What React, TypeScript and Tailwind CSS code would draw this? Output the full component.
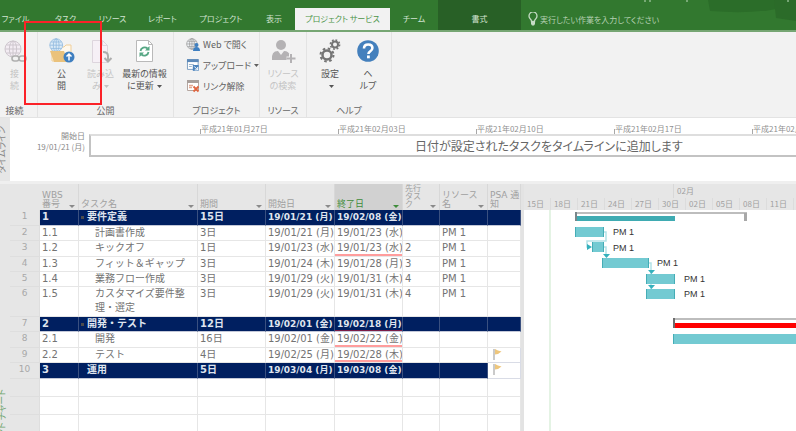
import React from "react";

type TaskRow = {
  id: number;
  wbs: string;
  name: string;
  duration: string;
  start: string;
  finish: string;
  pred?: string;
  resource?: string;
  summary?: boolean;
  collapsible?: boolean;
  late?: boolean;
  flag?: boolean;
  height: string;
};

const tasks: TaskRow[] = [
  { id: 1, wbs: "1", name: "要件定義", duration: "15日", start: "19/01/21 (月)", finish: "19/02/08 (金)", summary: true, collapsible: true, height: "h-[16px]" },
  { id: 2, wbs: "1.1", name: "計画書作成", duration: "3日", start: "19/01/21 (月)", finish: "19/01/23 (水)", resource: "PM 1", height: "h-[15px]" },
  { id: 3, wbs: "1.2", name: "キックオフ", duration: "1日", start: "19/01/23 (水)", finish: "19/01/23 (水)", pred: "2", resource: "PM 1", late: true, height: "h-[16px]" },
  { id: 4, wbs: "1.3", name: "フィット＆ギャップ", duration: "3日", start: "19/01/24 (木)", finish: "19/01/28 (月)", pred: "3", resource: "PM 1", height: "h-[15px]" },
  { id: 5, wbs: "1.4", name: "業務フロー作成", duration: "3日", start: "19/01/29 (火)", finish: "19/01/31 (木)", pred: "4", resource: "PM 1", height: "h-[15px]" },
  { id: 6, wbs: "1.5", name: "カスタマイズ要件整理・選定", duration: "3日", start: "19/01/29 (火)", finish: "19/01/31 (木)", pred: "4", resource: "PM 1", height: "h-[30px]" },
  { id: 7, wbs: "2", name: "開発・テスト", duration: "12日", start: "19/02/01 (金)", finish: "19/02/18 (月)", summary: true, collapsible: true, late: true, height: "h-[15px]" },
  { id: 8, wbs: "2.1", name: "開発", duration: "16日", start: "19/02/01 (金)", finish: "19/02/22 (金)", late: true, height: "h-[16px]" },
  { id: 9, wbs: "2.2", name: "テスト", duration: "4日", start: "19/02/25 (月)", finish: "19/02/28 (木)", late: true, flag: true, height: "h-[15px]" },
  { id: 10, wbs: "3", name: "運用", duration: "5日", start: "19/03/04 (月)", finish: "19/03/08 (金)", summary: true, flag: true, height: "h-[16px]" },
];

const columns = [
  { label: "WBS 番号", width: "w-[39px]", box: "w-[24px]", arrow: true },
  { label: "タスク名", width: "w-[119px]", box: "w-[90px]", arrow: true },
  { label: "期間", width: "w-[68px]", box: "w-[40px]", arrow: true },
  { label: "開始日", width: "w-[69px]", box: "w-[40px]", arrow: true },
  { label: "終了日", width: "w-[68px]", box: "w-[40px]", arrow: true, active: true },
  { label: "先行タスク", width: "w-[37px]", box: "w-[18px] text-[8px] leading-[8px]", arrow: true },
  { label: "リソース名", width: "w-[48px]", box: "w-[36px]", arrow: true },
  { label: "PSA 通知", width: "w-[33px]", box: "w-[30px]", arrow: false },
];

const days = ["15日", "18日", "21日", "24日", "27日", "30日", "02日", "05日", "08日", "11日", "14日"];
const weeks = ["平成21年01月27日", "平成21年02月03日", "平成21年02月10日", "平成21年02月17日", "平成21年02月24日"];

function Caret() {
  return (
    <svg width="5" height="3" viewBox="0 0 5 3" className="ml-[3px] inline-block align-middle" aria-hidden="true">
      <path d="M0 0h5L2.500 3z" fill="currentColor" />
    </svg>
  );
}

function Tab({ children, className }: { children: React.ReactNode; className: string }) {
  return (
    <button role="tab" className={`h-[22px] shrink-0 whitespace-nowrap text-center text-[8px] leading-[22px] ${className}`}>
      {children}
    </button>
  );
}

function Group({ label, className, children }: { label: string; className: string; children: React.ReactNode }) {
  return (
    <section aria-label={label} className={`flex h-full shrink-0 flex-col border-r border-[#e3e3e3] ${className}`}>
      <div className="flex flex-1 justify-center pt-[6px]">{children}</div>
      <div className="h-[13px] text-center text-[9px] leading-[13px] text-[#666]">{label}</div>
    </section>
  );
}

function BigButton({ icon, lines, className, disabled, menu }: { icon: React.ReactNode; lines: string[]; className: string; disabled?: boolean; menu?: boolean }) {
  return (
    <button disabled={disabled} className={`flex shrink-0 flex-col items-center text-[9px] leading-[12px] ${disabled ? "text-[#c4c4c4]" : "text-[#555]"} ${className}`}>
      <span className="flex h-[30px] items-start justify-center">{icon}</span>
      {lines.map((l, i) => (
        <span key={i} className="h-[12px] whitespace-nowrap">
          {l}
          {menu && i === lines.length - 1 && <Caret />}
        </span>
      ))}
    </button>
  );
}

function SmallButton({ icon, label, menu }: { icon: React.ReactNode; label: string; menu?: boolean }) {
  return (
    <button className="flex h-[21px] items-center whitespace-nowrap text-[9px] text-[#606060]">
      {icon}
      <span className="pl-[3px]">{label}</span>
      {menu && <Caret />}
    </button>
  );
}

function GlobeLines({ color, fill }: { color: string; fill: string }) {
  return (
    <g stroke={color} fill="none">
      <circle cx="9" cy="9" r="8" fill={fill} />
      <ellipse cx="9" cy="9" rx="3.6" ry="8" />
      <path d="M9 1v16M1 9h16M2.5 5h13M2.5 13h13" />
    </g>
  );
}

const ConnectIcon = () => (
  <svg width="26" height="27" viewBox="0 0 26 27" aria-hidden="true">
    <g transform="translate(2 2)"><GlobeLines color="#cdc6cd" fill="#f3ecf3" /></g>
    <g fill="#f2f2f2" stroke="#b0b0b0" strokeWidth="1.6">
      <rect x="10" y="18" width="7" height="5" rx="2.5" />
      <rect x="17" y="18" width="7" height="5" rx="2.5" />
    </g>
  </svg>
);

const PublishIcon = () => (
  <svg width="26" height="27" viewBox="0 0 26 27" aria-hidden="true">
    <path d="M3 9h12l2-2h5v16H3z" fill="#fff8ec" stroke="#f0cf99" />
    <g transform="scale(.8)"><GlobeLines color="#8fb9de" fill="#dcebf7" /></g>
    <path d="M1 13h14l4 11H5z" fill="#eac27c" />
    <circle cx="20" cy="19" r="5.5" fill="#3f7fc0" />
    <path d="M20 22.500v-6M17.500 18.500l2.500-2.500 2.500 2.500" stroke="#fff" strokeWidth="1.500" fill="none" />
  </svg>
);

const ImportIcon = () => (
  <svg width="26" height="27" viewBox="0 0 26 27" aria-hidden="true">
    <path d="M4.500 2.500h10l5 5v17h-15z" fill="#f6f0f6" stroke="#ddd5dd" />
    <path d="M14.500 2.500v5h5" fill="none" stroke="#ddd5dd" />
    <path d="M15 14q5 0 5 4v5M16.500 20l3.500 3.500 3.500-3.500" fill="none" stroke="#adadad" strokeWidth="2" />
  </svg>
);

const RefreshIcon = () => (
  <svg width="20" height="26" viewBox="0 0 20 26" aria-hidden="true">
    <path d="M1.500 2.500h12l4 4v17h-16z" fill="#fff" stroke="#b9b9b9" />
    <path d="M13.500 2.500v4h4" fill="none" stroke="#b9b9b9" />
    <path d="M5.500 13a4.200 4.200 0 0 1 7-2.500M13.500 14a4.200 4.200 0 0 1-7 2.500" fill="none" stroke="#56a784" strokeWidth="1.800" />
    <path d="M14.500 8v4.500H10zM4.500 19v-4.500H9z" fill="#56a784" />
  </svg>
);

const WebIcon = () => (
  <svg width="14" height="13" viewBox="0 0 14 13" aria-hidden="true">
    <g transform="scale(.66)"><GlobeLines color="#949494" fill="#eef1f4" /></g>
    <circle cx="10.500" cy="7" r="2" fill="#3f7fc0" />
    <path d="M7 13q0-4 3.500-4t3.500 4z" fill="#3f7fc0" />
  </svg>
);

const UploadIcon = () => (
  <svg width="14" height="13" viewBox="0 0 14 13" aria-hidden="true">
    <path d="M1.500.5h11v10h-11z" fill="#fff" stroke="#7d9fc2" />
    <path d="M1 0h12v3H1z" fill="#5b88b8" />
    <path d="M3 5.500h5M3 7.500h3" stroke="#9ab3cd" />
    <path d="M7 6h6v6H7z" fill="#4b83bd" />
    <path d="M8.500 7.500l3.500 3.500M12 8v3H9" stroke="#fff" fill="none" />
  </svg>
);

const UnlinkIcon = () => (
  <svg width="14" height="13" viewBox="0 0 14 13" aria-hidden="true">
    <path d="M1.500.5h11v10h-11z" fill="#fff" stroke="#b5a6a0" />
    <path d="M1 0h12v3H1z" fill="#a9a09c" />
    <path d="M3 5.500h4M3 7.500h3" stroke="#e3a88f" strokeWidth="1.500" />
    <path d="M7.500 6.500l5 5M12.500 6.500l-5 5" stroke="#e0653f" strokeWidth="1.800" />
  </svg>
);

const PersonIcon = () => (
  <svg width="26" height="26" viewBox="0 0 26 26" aria-hidden="true">
    <circle cx="11" cy="7" r="5" fill="#b4b2b4" />
    <path d="M2 22q-1-9 6-9l3 4 3-4q5 0 6 5v4z" fill="#b4b2b4" />
    <path d="M21 16v9M16.500 20.500h9" stroke="#f2f2f2" strokeWidth="4" />
    <path d="M21 16v9M16.500 20.500h9" stroke="#b4b2b4" strokeWidth="2" />
  </svg>
);

const GearsIcon = () => (
  <svg width="22" height="26" viewBox="0 0 22 26" aria-hidden="true">
    <g fill="none" stroke="#757575">
      <circle cx="8" cy="17" r="4.500" strokeWidth="2.500" />
      <circle cx="8" cy="17" r="6.500" strokeWidth="2" strokeDasharray="2.550 2.550" />
      <circle cx="16" cy="6.500" r="3" strokeWidth="2" />
      <circle cx="16" cy="6.500" r="4.600" strokeWidth="1.600" strokeDasharray="1.800 1.800" />
    </g>
  </svg>
);

const HelpIcon = () => (
  <svg width="24" height="26" viewBox="0 0 24 26" aria-hidden="true">
    <circle cx="12" cy="13" r="10.800" fill="#4480bd" />
    <path d="M8 10.500q0-4 4.200-4t4.200 3.600q0 2-2.200 3.200-1.800 1-1.800 2.700" fill="none" stroke="#fff" strokeWidth="2.600" />
    <rect x="11" y="17.500" width="2.800" height="2.800" fill="#fff" />
  </svg>
);

const Flag = () => (
  <svg width="9" height="12" viewBox="0 0 9 12" className="ml-[3px] block" role="img" aria-label="通知">
    <path d="M1 1v11" stroke="#b8b8b8" strokeWidth="1.500" />
    <path d="M2 1l3 1.500 3.500 1L5 6 2 6.500z" fill="#eec67c" />
  </svg>
);

function TaskTable() {
  const cell = "overflow-hidden whitespace-nowrap border-r border-b p-0 pl-[2px] align-top";
  return (
    <table className="w-[511px] shrink-0 table-fixed border-separate border-spacing-0 font-['DejaVu_Sans','Noto_Sans_CJK_JP',sans-serif] text-[10px] leading-[14px] text-[#737373] [font-feature-settings:normal]">
      <thead>
        <tr className="h-[26px] bg-[#e6e6e6]">
          <th className="w-[30px] p-0" aria-label="行" />
          {columns.map((c) => (
            <th key={c.label} className={`border-r border-[#d8d8d8] p-0 font-normal ${c.width} ${c.active ? "bg-[#d1d1d1] text-[#3e8c3a]" : "text-[#a0a0a0]"}`}>
              <div className="flex h-[26px] items-end justify-between overflow-hidden pr-[3px] pb-[1px] pl-[2px] text-left text-[9px] leading-[9px]">
                <span className={`shrink-0 ${c.box}`}>{c.label}</span>
                {c.arrow && (
                  <svg width="6" height="5" viewBox="0 0 6 5" className={`shrink-0 ${c.active ? "fill-[#3e8c3a]" : "fill-[#8a8a8a]"}`} aria-hidden="true">
                    <path d="M0 1h6L3 4z" />
                  </svg>
                )}
              </div>
            </th>
          ))}
        </tr>
      </thead>
      <tbody>
        {tasks.map((t) => {
          const tone = t.summary ? "bg-[#001f60] border-r-[#3a5080] border-b-[#c3c8d8] font-bold text-[#dfe4ee]" : "bg-white border-[#e6e6e6]";
          const underline = t.late ? (t.summary ? "shadow-[inset_0_-1px_0_#7b1c46]" : "shadow-[inset_0_-2px_0_#ff9d9d]") : "";
          return (
            <tr key={t.id} className={t.height}>
              <th scope="row" className="border-r border-b border-[#dedede] bg-[#e6e6e6] p-0 align-top text-[9px] leading-[12px] font-normal text-[#a8a8a8]">{t.id}</th>
              <td className={`${cell} ${tone}`}>{t.wbs}</td>
              <td className={`${cell} ${tone}`}>
                {t.summary ? (
                  <div className="flex items-center">
                    <span className="flex w-[6px] items-center">
                      {t.collapsible && <span className="h-[3px] w-[3px] bg-[#4c4c4c]" />}
                    </span>
                    {t.name}
                  </div>
                ) : (
                  <div className="whitespace-normal pl-[14px] pr-[6px]">{t.name}</div>
                )}
              </td>
              <td className={`${cell} ${tone}`}>{t.duration}</td>
              <td className={`${cell} ${tone} ${t.summary ? "text-[9px]" : ""}`}>{t.start}</td>
              <td className={`${cell} ${tone} ${underline} ${t.summary ? "text-[9px]" : ""}`}>{t.finish}</td>
              <td className={`${cell} ${tone}`}>{t.pred}</td>
              <td className={`${cell} ${tone}`}>{t.resource}</td>
              <td className={`${cell} ${t.flag ? "border-[#d9dce6] bg-white" : tone}`}>{t.flag && <Flag />}</td>
            </tr>
          );
        })}
        {[11, 12, 13].map((n) => (
          <tr key={n} className="h-[18px]">
            <td className="border-r border-b border-[#dedede] bg-[#e6e6e6] p-0" />
            {columns.map((c) => (
              <td key={c.label} className="border-r border-b border-[#e6e6e6] bg-white p-0" />
            ))}
          </tr>
        ))}
      </tbody>
    </table>
  );
}

function Bar({ x, y, w }: { x: number; y: number; w: number }) {
  return (
    <g>
      <rect x={x} y={y} width={w} height="10" fill="#73cad2" />
      <rect x={x} y={y} width="1" height="10" fill="#45adb6" />
      <rect x={x + w - 1} y={y} width="1" height="10" fill="#45adb6" />
    </g>
  );
}

function Gantt() {
  return (
    <div className="flex min-w-0 flex-1 flex-col overflow-hidden bg-white">
      <div className="h-[26px] shrink-0 overflow-hidden bg-[#e6e6e6] text-[8px] text-[#a0a0a0]">
        <div className="flex h-[14px] leading-[14px]">
          <div className="w-[150px] shrink-0 border-r border-[#d8d8d8]" />
          <div className="pl-[3px]">02月</div>
        </div>
        <div className="flex h-[12px] leading-[12px]">
          {days.map((d) => (
            <div key={d} className="w-[27px] shrink-0 whitespace-nowrap border-r border-[#dcdcdc] pl-[3px]">{d}</div>
          ))}
        </div>
      </div>
      <svg className="h-[221px] w-full" role="img" aria-label="ガント チャート">
        <rect x="25" y="0" width="2" height="221" fill="#e4f3e4" />
        <path d="M52 3h170v8" fill="none" stroke="#bdbdbd" strokeWidth="2" />
        <rect x="220" y="3" width="3" height="8" fill="#a8a8a8" />
        <rect x="52" y="6" width="99" height="5" fill="#3fabb2" />
        <rect x="51" y="2" width="2" height="9" fill="#78868a" />
        <g fill="none" stroke="#b3e2e7" strokeWidth="1.500">
          <path d="M79 22h3v9H63v6h3" />
          <path d="M79 37h3v10" />
          <path d="M124 53h3v34" />
        </g>
        <g fill="#35b1bd">
          <path d="M63 34l5 3-5 3zM79 44h7l-3.500 4zM124 60h7l-3.500 4zM124 75h7l-3.500 4z" />
        </g>
        <Bar x={51} y={17} w={29} />
        <Bar x={68} y={32} w={12} />
        <Bar x={78} y={48} w={47} />
        <Bar x={122} y={64} w={29} />
        <Bar x={122} y={79} w={29} />
        <g className="fill-[#333] font-['Liberation_Sans',sans-serif] text-[9px]">
          <text x="89" y="25">PM 1</text>
          <text x="89" y="41">PM 1</text>
          <text x="133" y="56">PM 1</text>
          <text x="160" y="72">PM 1</text>
          <text x="160" y="87">PM 1</text>
        </g>
        <rect x="150" y="108" width="3000" height="2" fill="#bdbdbd" />
        <rect x="150" y="113" width="3000" height="5" fill="#ff0000" />
        <rect x="149" y="108" width="2" height="10" fill="#6d6d6d" />
        <rect x="149" y="124" width="3000" height="10" fill="#73cad2" />
        <rect x="149" y="124" width="1" height="10" fill="#45adb6" />
      </svg>
    </div>
  );
}

export default function App() {
  return (
    <div className="relative flex w-full flex-col overflow-hidden bg-[#e6e6e6] font-['Noto_Sans_CJK_JP',sans-serif] [font-feature-settings:'palt']">
      <header className="relative flex h-[32px] items-end overflow-hidden border-b-2 border-[#76a673] bg-[#32782f] text-[#d3e4d2]">
        <svg className="absolute top-0 right-0" width="160" height="24" viewBox="0 0 160 24" aria-hidden="true">
          <path d="M72 0h68v9q-26 5-66 2z" fill="#2b6d29" />
          <path d="M138 0h22v21l-20-3z" fill="#2b6b29" />
          <path d="M9 0v2M14 0v2M51 0v2M152 0v2" stroke="#8fb98d" strokeWidth="1.500" />
        </svg>
        <nav role="tablist" aria-label="リボン" className="-mb-[2px] flex h-[32px] items-end">
          <Tab className="mt-[8px] w-[31px] self-start">ファイル</Tab>
          <Tab className="mt-[8px] ml-[11px] w-[47px] self-start">タスク</Tab>
          <Tab className="mt-[8px] w-[47px] self-start">リソース</Tab>
          <Tab className="mt-[8px] w-[53px] self-start">レポート</Tab>
          <Tab className="mt-[8px] w-[64px] self-start">プロジェクト</Tab>
          <Tab className="mt-[8px] w-[42px] self-start">表示</Tab>
          <div className="flex h-[24px] w-[95px] bg-[#f2f2f2]">
            <Tab className="w-full text-[#4c9448]">プロジェクト サービス</Tab>
          </div>
          <Tab className="mt-[8px] w-[48px] self-start">チーム</Tab>
          <div className="mb-[2px] flex h-[30px] w-[83px] items-end bg-[#286026]">
            <Tab className="w-full">書式</Tab>
          </div>
        </nav>
        <label className="flex h-[22px] min-w-0 flex-1 items-center gap-[2px] pl-[7px]">
          <svg width="10" height="14" viewBox="0 0 10 14" className="shrink-0" aria-hidden="true">
            <path d="M3.500 9.500q0-1.500-1.300-2.700a4 4 0 1 1 5.600 0Q6.500 8 6.500 9.500z" fill="none" stroke="#c6dcc5" strokeWidth="1.300" />
            <path d="M3 10h4v2l-1 1.500H4L3 12z" fill="#c6dcc5" />
          </svg>
          <input aria-label="操作アシスト" placeholder="実行したい作業を入力してください" className="h-[20px] w-full min-w-0 bg-transparent text-[8px] text-[#b4d0b2] outline-none placeholder:text-[#b4d0b2]" />
        </label>
      </header>

      <div className="flex h-[86px] border-b border-[#e3e3e3] bg-[#f2f2f2]">
        <Group label="接続" className="w-[38px] pr-[8px]">
          <BigButton icon={<ConnectIcon />} lines={["接", "続"]} className="w-[26px]" disabled />
        </Group>
        <Group label="公開" className="w-[136px]">
          <BigButton icon={<PublishIcon />} lines={["公", "開"]} className="w-[40px]" />
          <BigButton icon={<ImportIcon />} lines={["読み込", "み"]} className="w-[38px]" disabled menu />
          <BigButton icon={<RefreshIcon />} lines={["最新の情報", "に更新"]} className="w-[50px]" menu />
        </Group>
        <Group label="プロジェクト" className="w-[86px]">
          <div className="-mt-[4px] flex w-full flex-col pl-[12px]">
            <SmallButton icon={<WebIcon />} label="Web で開く" />
            <SmallButton icon={<UploadIcon />} label="アップロード" menu />
            <SmallButton icon={<UnlinkIcon />} label="リンク解除" />
          </div>
        </Group>
        <Group label="リソース" className="w-[47px]">
          <BigButton icon={<PersonIcon />} lines={["リソース", "の検索"]} className="w-[42px]" disabled />
        </Group>
        <Group label="ヘルプ" className="w-[85px]">
          <BigButton icon={<GearsIcon />} lines={["設定", ""]} className="w-[38px]" menu />
          <BigButton icon={<HelpIcon />} lines={["ヘ", "ルプ"]} className="w-[38px]" />
        </Group>
      </div>

      <div className="flex h-[66px] border-b-3 border-[#efefef] bg-white">
        <div className="flex w-[10px] shrink-0 items-center justify-end overflow-hidden bg-[#e6e6e6]">
          <span className="mr-[3px] rotate-180 whitespace-nowrap text-[9px] leading-[10px] text-[#888] [text-orientation:sideways] [writing-mode:vertical-rl]">タイムライン</span>
        </div>
        <div className="w-[79px] shrink-0 pt-[12px] pr-[4px] text-right text-[8px] leading-[11px] text-[#8a8a8a]">
          <div>開始日</div>
          <div className="whitespace-nowrap">19/01/21 (月)</div>
        </div>
        <div className="flex min-w-0 flex-1 flex-col overflow-hidden">
          <div className="flex h-[16px] items-end pl-[111px]">
            {weeks.map((w) => (
              <div key={w} className="flex w-[138px] shrink-0 items-end">
                <span className="h-[5px] w-px bg-[#a8a8a8]" />
                <span className="h-[11px] whitespace-nowrap text-[8px] leading-[11px] text-[#909090]">{w}</span>
              </div>
            ))}
          </div>
          <div className="h-[23px] whitespace-nowrap border-y-2 border-l-2 border-t-[#dedede] border-b-[#c3c3c3] border-l-[#c3c3c3] pl-[324px] text-[12px] leading-[19px] text-[#666]">
            日付が設定されたタスクをタイムラインに追加します
          </div>
        </div>
      </div>

      <main className="flex h-[247px] overflow-hidden">
        <div className="flex w-[10px] shrink-0 items-start justify-end overflow-hidden pt-[205px]">
          <span className="mr-[3px] rotate-180 whitespace-nowrap text-[9px] leading-[10px] text-[#6fa56c] [text-orientation:sideways] [writing-mode:vertical-rl]">ガント チャート</span>
        </div>
        <TaskTable />
        <div className="w-[3px] shrink-0 bg-[#e3e3e3]" />
        <Gantt />
      </main>

      <div className="pointer-events-none absolute top-[21px] left-[24px] h-[84px] w-[78px] border-2 border-[#fb2228]" />
    </div>
  );
}
